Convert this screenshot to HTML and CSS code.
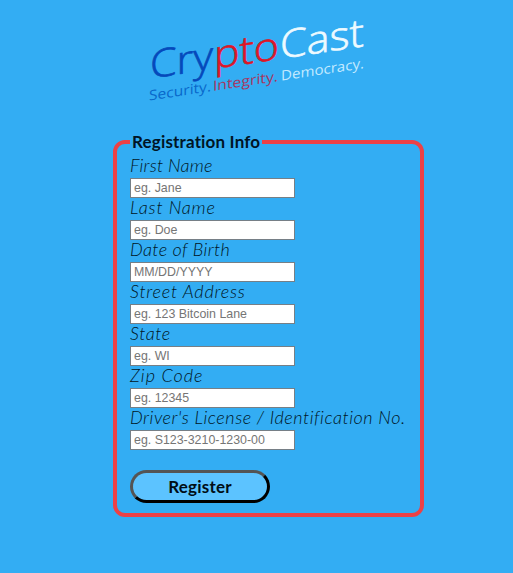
FILE: index.html
```
<!DOCTYPE html>
<html lang="en">
<head>
    <meta charset="UTF-8">
    <meta name="viewport" content="width=device-width, initial-scale=1.0">
    <title>CryptoCast</title>
    <link rel="stylesheet" href="styles.css">
</head>
<body>
    <header>
        <svg class="logo" width="230" height="100" viewBox="0 0 230 100" role="img" aria-label="CryptoCast">
            <g transform="translate(10 70) skewY(-8.6)">
                <g class="logo-name">
                    <text class="blue" x="-3" y="-1" textLength="63" lengthAdjust="spacingAndGlyphs">Cry</text>
                    <text class="red" x="61" y="-1" textLength="65" lengthAdjust="spacingAndGlyphs">pto</text>
                    <text class="white" x="127" y="-1" textLength="84" lengthAdjust="spacingAndGlyphs">Cast</text>
                </g>
                <g class="logo-tagline">
                    <text class="blue" x="-4" y="21" textLength="62" lengthAdjust="spacingAndGlyphs">Security.</text>
                    <text class="red" x="60" y="21" textLength="65" lengthAdjust="spacingAndGlyphs">Integrity.</text>
                    <text class="white" x="128" y="21" textLength="83" lengthAdjust="spacingAndGlyphs">Democracy.</text>
                </g>
            </g>
        </svg>
    </header>

    <form>
        <fieldset>
            <legend>Registration Info</legend>
            <label class="first" for="fname">First Name</label>
            <input type="text" id="fname" placeholder="eg. Jane">
            <label class="last" for="lname">Last Name</label>
            <input type="text" id="lname" placeholder="eg. Doe">
            <label class="dob" for="dob">Date of Birth</label>
            <input type="text" id="dob" placeholder="MM/DD/YYYY">
            <label class="street" for="address">Street Address</label>
            <input type="text" id="address" placeholder="eg. 123 Bitcoin Lane">
            <label class="state" for="state">State</label>
            <input type="text" id="state" placeholder="eg. WI">
            <label class="zip" for="zip">Zip Code</label>
            <input type="text" id="zip" placeholder="eg. 12345">
            <label class="license" for="license">Driver's License / Identification No.</label>
            <input type="text" id="license" placeholder="eg. S123-3210-1230-00">
            <button type="button">Register</button>
        </fieldset>
    </form>
</body>
</html>
```

FILE: styles.css
```
body {
    margin: 0;
    background-color: #33adf3;
    font-family: "Century Gothic", Lato, sans-serif;
    color: #001525;
}
header {
    height: 132px;
    padding-left: 143px;
}
.logo {
    display: block;
    padding-top: 9px;
}
.logo-name {
    font-family: "Open Sans", sans-serif;
    font-size: 39px;
    font-weight: 300;
    stroke-width: 0.7px;
}
.logo-tagline {
    font-family: "Open Sans", sans-serif;
    font-size: 14px;
}
.logo-name .blue {
    fill: #0549bb;
    stroke: #0549bb;
}
.logo-name .red {
    fill: #dc1728;
    stroke: #dc1728;
}
.logo-name .white {
    fill: #eefaff;
    stroke: #eefaff;
}
.logo-tagline .blue {
    fill: #0968ca;
}
.logo-tagline .red {
    fill: #a93560;
}
.logo-tagline .white {
    fill: #c3eaff;
}
fieldset {
    box-sizing: border-box;
    width: 311px;
    height: 385px;
    margin: 0 0 0 113px;
    padding: 4px 13px 0;
    border: 4px solid #ec4146;
    border-radius: 12px;
}
legend {
    height: 20px;
    padding: 0 2px;
    font-size: 17px;
    font-weight: bold;
    letter-spacing: 0.17px;
    line-height: 20px;
}
label {
    display: block;
    height: 22px;
    font-size: 18px;
    font-style: italic;
    font-weight: 300;
    letter-spacing: 0.54px;
    line-height: 18px;
    white-space: nowrap;
}
.first {
    letter-spacing: 0.2px;
}
.last {
    letter-spacing: 0.8px;
}
.dob {
    letter-spacing: 0.4px;
}
.street {
    letter-spacing: 0.8px;
}
.zip {
    letter-spacing: 1px;
}
input {
    display: block;
    box-sizing: border-box;
    width: 165px;
    height: 20px;
    padding: 0 3px;
    border: 1px solid #767f86;
    background: white;
    font-family: "Liberation Sans", Arial, sans-serif;
    font-size: 12.4px;
}
input::placeholder {
    color: #757575;
}
button {
    display: block;
    box-sizing: border-box;
    width: 140px;
    height: 33px;
    margin-top: 20px;
    padding: 0;
    border: 3px outset black;
    border-radius: 17px;
    background-color: #5cc3ff;
    color: #000d16;
    font-family: inherit;
    font-size: 17px;
    font-weight: bold;
    letter-spacing: 0.2px;
}
```
